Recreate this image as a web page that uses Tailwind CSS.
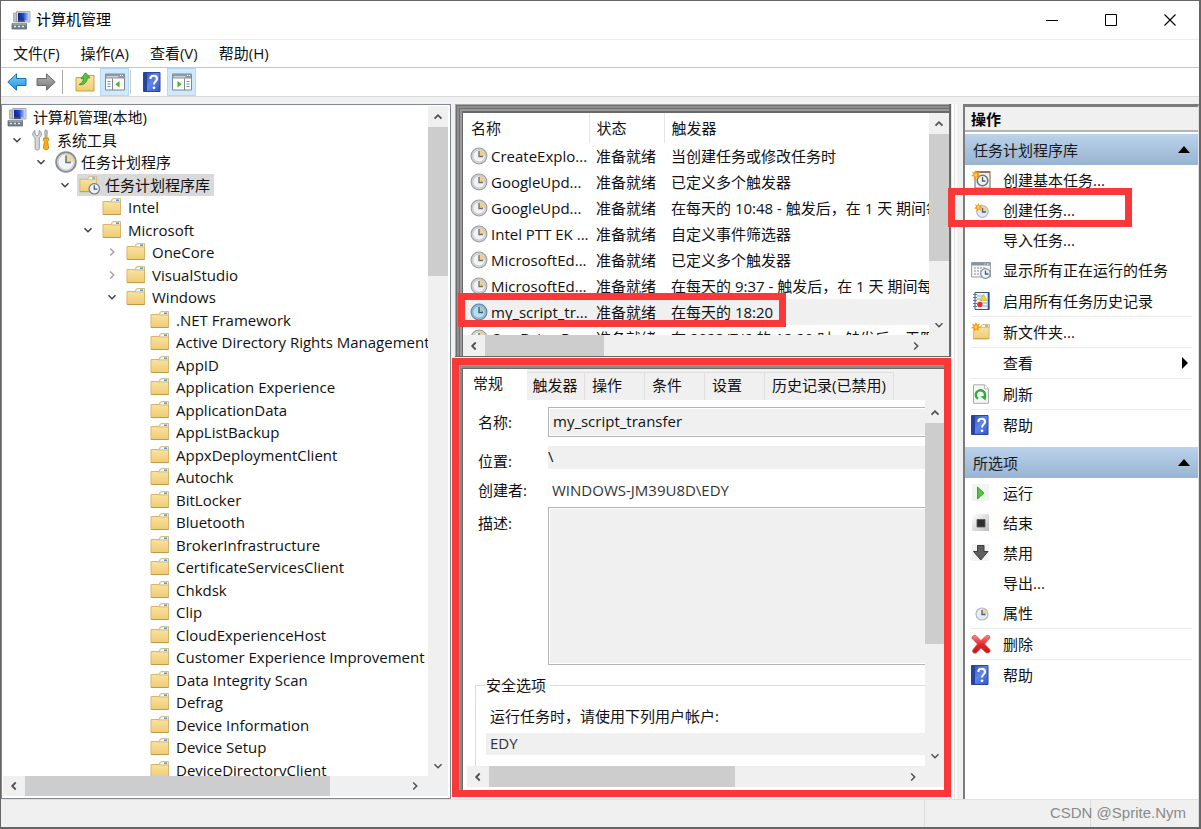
<!DOCTYPE html>
<html lang="zh-CN">
<head>
<meta charset="utf-8">
<title>计算机管理</title>
<script src="https://cdn.jsdelivr.net/npm/@tailwindcss/browser@4"></script>
</head>
<body class="h-screen overflow-hidden bg-[#666] font-['Open_Sans','Noto_Sans_CJK_SC',sans-serif] text-[15px] leading-[22px] text-[#111]">

<svg class="absolute size-0" aria-hidden="true">
  <defs>
    <linearGradient id="gFolder" x1="0" y1="0" x2="0" y2="1"><stop offset="0" stop-color="#fbe7a8"/><stop offset="1" stop-color="#efcb73"/></linearGradient>
    <linearGradient id="gBlue" x1="0" y1="0" x2="1" y2="1"><stop offset="0" stop-color="#2b4cae"/><stop offset=".5" stop-color="#5f86e6"/><stop offset="1" stop-color="#2f56c4"/></linearGradient>
    <linearGradient id="gScreen" x1="0" y1="0" x2="1" y2="0"><stop offset="0" stop-color="#0c1fa8"/><stop offset=".5" stop-color="#1f49e0"/><stop offset="1" stop-color="#b9d0ff"/></linearGradient>
    <linearGradient id="gSky" x1="0" y1="0" x2="0" y2="1"><stop offset="0" stop-color="#7fd0f8"/><stop offset="1" stop-color="#1d8fdc"/></linearGradient>
    <linearGradient id="gGrey" x1="0" y1="0" x2="0" y2="1"><stop offset="0" stop-color="#b5b5b5"/><stop offset="1" stop-color="#787878"/></linearGradient>
    <linearGradient id="gRed" x1="0" y1="0" x2="0" y2="1"><stop offset="0" stop-color="#f58a86"/><stop offset=".5" stop-color="#e8262a"/><stop offset="1" stop-color="#c4141a"/></linearGradient>
    <linearGradient id="gStop" x1="0" y1="0" x2="1" y2="1"><stop offset="0" stop-color="#fff"/><stop offset="1" stop-color="#bdbdbd"/></linearGradient>
  </defs>
  <symbol id="folder" viewBox="0 0 20 20">
    <path d="M1 4.500h8l1.500-2.500h8v15.500H1z" fill="url(#gFolder)" stroke="#d8b56c"/>
    <path d="M9.500 3.500l1.500-2h7.500v3.500H9z" fill="#f3ead0" stroke="#cdb682" stroke-width=".8"/>
    <path d="M11.500 2.500h2.500v1.500h-2.500z" fill="#fff"/><path d="M14 2.500h3v1.500h-3z" fill="#4f9bd8"/>
    <path d="M1 17.500h17.500" stroke="#c39a48"/>
  </symbol>
  <symbol id="clock" viewBox="0 0 20 20">
    <circle cx="10" cy="10" r="8.800" fill="#d4d6d8" stroke="#9a9da0" stroke-width="1.200"/>
    <circle cx="10" cy="10" r="6.800" fill="#f1f2f3" stroke="#b4b7ba" stroke-width=".7"/>
    <path d="M10 10V3.400A6.600 6.600 0 0 1 16.600 10z" fill="#f3cf8c"/>
    <path d="M10 4.500V10.500H14.500" fill="none" stroke="#6f6f72" stroke-width="1.500"/>
  </symbol>
  <symbol id="clockblue" viewBox="0 0 20 20">
    <circle cx="10" cy="10" r="8.800" fill="#8dbbd9" stroke="#5b87a5" stroke-width="1.200"/>
    <circle cx="10" cy="10" r="6.800" fill="#b9dbef" stroke="#7ba8c6" stroke-width=".7"/>
    <path d="M10 10V3.400A6.600 6.600 0 0 1 16.600 10z" fill="#a9c9bd"/>
    <path d="M10 4.500V10.500H14.500" fill="none" stroke="#35607e" stroke-width="1.600"/>
  </symbol>
  <symbol id="clockbig" viewBox="0 0 20 20">
    <circle cx="10" cy="10" r="8.900" fill="#f2f4f6" stroke="#8b8d90" stroke-width="1.800"/>
    <circle cx="10" cy="10" r="7.300" fill="none" stroke="#c9ccd0" stroke-width="1"/>
    <path d="M10 10V3A7 7 0 0 1 17 10z" fill="#f6d79a"/>
    <path d="M10 4V10.500H14.500" fill="none" stroke="#5b7696" stroke-width="1.400"/>
  </symbol>
  <symbol id="folderclock" viewBox="0 0 22 20">
    <use href="#folder" x="0" y="0" width="19" height="19"/>
    <circle cx="15.300" cy="13.800" r="5.200" fill="#eef1f4" stroke="#74787c" stroke-width="1.200"/>
    <path d="M15.300 10.300V14.200H18.300" fill="none" stroke="#2f5f95" stroke-width="1.300"/>
  </symbol>
  <symbol id="computer" viewBox="0 0 20 20">
    <path d="M5.500 1.500h13.500v10.500H5.500z" fill="#dcdcd4" stroke="#9a9a92" stroke-width=".8"/>
    <path d="M7 2.800h10.800v7.800H7z" fill="url(#gScreen)"/>
    <path d="M2.500 3h3v9h-3z" fill="#b9c6b6" stroke="#8f968c" stroke-width=".6"/>
    <path d="M6.500 12l3.500-7 3 4.500 1 2.500z" fill="#26365c" fill-opacity=".75"/>
    <path d="M1 13.500h14.500v5.500H1z" fill="#72808c" stroke="#5d6973" stroke-width=".8"/>
    <path d="M1.500 14h13.500" stroke="#b5c2cc"/><path d="M3 16.500h2M7 16.500h2M11 16.500h2" stroke="#dfe6eb" stroke-width="1.300"/>
  </symbol>
  <symbol id="tools" viewBox="0 0 20 22">
    <path d="M3 1.500v4l2 1.500 2-1.500v-4c2 .8 2.800 2.800 2.400 4.600C9 7.600 7.500 8.400 7.300 9v10.500c0 2-4.200 2-4.200 0V9C2.800 8.400 1.200 7.600.9 6.100.5 4.300 1.200 2.300 3 1.500z" fill="#d5d8da" stroke="#84888b" stroke-width=".8"/>
    <path d="M13.200 1h1.600l.6 2-.6 6h-1.600l-.6-6z" fill="#c2c5c7" stroke="#85888a" stroke-width=".7"/>
    <path d="M11.500 9h5l.2 2.500-1 1.200.9 6.300c0 2.300-5.200 2.300-5.200 0l.9-6.300-1-1.200z" fill="#f6ad1c" stroke="#c57f08" stroke-width=".8"/>
  </symbol>
  <symbol id="help" viewBox="0 0 18 20">
    <path d="M.5.5h16.500v19H.5z" fill="url(#gBlue)" stroke="#2a469c"/>
    <path d="M1 1h3v18H1z" fill="#26439b"/>
    <path d="M7.300 6.900C7.300 2.800 14 2.900 14 6.800c0 2.600-3 2.600-3 5.700" fill="none" stroke="#fff" stroke-width="2"/>
    <circle cx="11" cy="15.800" r="1.400" fill="#fff"/>
  </symbol>
  <symbol id="star" viewBox="0 0 10 10">
    <path d="M5 0l1.100 2.700L9 1.400 7.600 4.200 10 5.500 7.300 6.200 8 9 5.300 7.500 3 9.600 3 6.600 0 6l2.300-1.800L1 1.500l2.800 1.200z" fill="#fb9c14"/><circle cx="4.800" cy="4.900" r="1.500" fill="#ffd24a"/>
  </symbol>
  <symbol id="basic" viewBox="0 0 20 20">
    <path d="M4 2h15v16H4z" fill="#f4f2ee" stroke="#8d7c74" stroke-width="1.200"/><path d="M4 2h15" stroke="#a1584a" stroke-width="1.600"/>
    <circle cx="11.500" cy="10.500" r="5.300" fill="#f3f4f2" stroke="#6d7276" stroke-width="1.500"/>
    <path d="M11.500 7V11H14.500" fill="none" stroke="#41618a" stroke-width="1.300"/>
    <use href="#star" x="0" y="0" width="10" height="10"/>
  </symbol>
  <symbol id="create" viewBox="0 0 20 20">
    <circle cx="11.500" cy="11.500" r="5.800" fill="#dfe9f0" stroke="#a9b9c5" stroke-width="1.200"/>
    <path d="M11.500 11.500V6.500A5 5 0 0 1 16.500 11.500z" fill="#f2cf90"/>
    <path d="M11.500 8V12H15" fill="none" stroke="#41618a" stroke-width="1.300"/>
    <use href="#star" x="3" y="3" width="9" height="9"/>
  </symbol>
  <symbol id="props" viewBox="0 0 20 20">
    <circle cx="11" cy="11" r="6" fill="#e6eef4" stroke="#aebac4" stroke-width="1.200"/>
    <path d="M11 11V5.500A5.500 5.500 0 0 1 16.500 11z" fill="#f5d292"/>
    <path d="M11 7V11.500H14.500" fill="none" stroke="#41618a" stroke-width="1.300"/>
  </symbol>
  <symbol id="running" viewBox="0 0 20 20">
    <path d="M.6 2.500h18.800v14.500H.6z" fill="#f7f7f5" stroke="#9a9da0"/><path d="M.6 2.500h18.800v3H.6z" fill="#8695a5"/>
    <path d="M13.500 4h1M16 4h1.500" stroke="#fff"/>
    <path d="M3 8h12M3 11h9M3 14h7" stroke="#8a8f94" stroke-dasharray="2 1"/>
    <circle cx="14.500" cy="13.500" r="4.800" fill="#eef4f6" stroke="#82929c" stroke-width="1.200"/>
    <path d="M14.500 10.500V14H17.500" fill="none" stroke="#35608d" stroke-width="1.300"/>
  </symbol>
  <symbol id="history" viewBox="0 0 20 20">
    <path d="M4 1.500h14v17H4z" fill="#f1f5fb" stroke="#35548f"/><path d="M17.500 1v18" stroke="#2b4f9c" stroke-width="1.600"/>
    <path d="M6 5h6M6 8h5M10 12h6M10 15h6" stroke="#8ea6c8"/>
    <path d="M2 3.500h4M2 6.500h4M2 9.500h4M2 12.500h4M2 15.500h4" stroke="#5f6a76" stroke-width=".9"/>
    <path d="M12.500 3.500l3.500 6H9z" fill="#f7d91f" stroke="#c9a60c" stroke-width=".6"/>
    <circle cx="8.800" cy="13.500" r="2.700" fill="#d93434"/>
  </symbol>
  <symbol id="newfolder" viewBox="0 0 20 20">
    <use href="#folder" x="1" y="1" width="19" height="18"/><use href="#star" x="0" y="0" width="10" height="10"/>
  </symbol>
  <symbol id="refresh" viewBox="0 0 20 20">
    <path d="M2.500.8h11l4 4v14.500h-15z" fill="#f4f6f4" stroke="#a9adab"/><path d="M13.500.8v4h4" fill="#fff" stroke="#a9adab" stroke-width=".8"/>
    <path d="M7 14.800A4.600 4.600 0 1 1 13.200 13.500" fill="none" stroke="#2fae36" stroke-width="2.400"/>
    <path d="M9.500 12.500l6-1-1 5z" fill="#2fae36"/>
  </symbol>
  <symbol id="run" viewBox="0 0 20 20"><path d="M1 1h17v17H1z" fill="#f3f3f3"/><path d="M6.500 4l6.500 6-6.500 6z" fill="#4ccb3a" stroke="#2c9a24" stroke-width=".9"/></symbol>
  <symbol id="stop" viewBox="0 0 20 20"><path d="M1 1h17v17H1z" fill="url(#gStop)"/><path d="M6 6.500h8v7.500H6z" fill="#2e2e2e" stroke="#555" stroke-width=".8"/></symbol>
  <symbol id="disable" viewBox="0 0 20 20"><path d="M1 1h17v17H1z" fill="#f3f3f3"/><path d="M6.500 2.500h6.500v6h4L9.800 17 2.500 8.500h4z" fill="#5e5e5e" stroke="#3b3b3b" stroke-linejoin="round"/></symbol>
  <symbol id="delete" viewBox="0 0 20 20"><path d="M1 3.500C1.500 1 4 .8 5.500 2.200L10 6.600l4.500-4.400C16 .8 18.800 1 19 3c.1 1-.5 1.600-1.200 2.300L13.600 10l5 5.200c.8 1 .8 2-.2 3s-2.800 1-3.600.2L10 14l-4.300 4.600c-1 .9-2.800.8-3.600-.2s-.7-2.200.2-3.200L6.500 10 2 5.500C1.300 4.800.8 4.300 1 3.500z" fill="url(#gRed)" stroke="#c9474a" stroke-width=".7"/></symbol>
  <symbol id="back" viewBox="0 0 20 20"><path d="M.8 10L9.500 1.800V6.500H19v7H9.500v4.700z" fill="url(#gSky)" stroke="#1673b8" stroke-linejoin="round"/></symbol>
  <symbol id="fwd" viewBox="0 0 20 20"><path d="M19.200 10L10.500 1.800V6.500H1v7h9.500v4.700z" fill="url(#gGrey)" stroke="#6a6a6a" stroke-linejoin="round"/></symbol>
  <symbol id="up" viewBox="0 0 20 20">
    <path d="M1 5.500h7l1.500-2H19V19H1z" fill="url(#gFolder)" stroke="#c99f45"/>
    <path d="M4 12.500C7 11.500 8.200 9.500 8.500 6.500L6 6.800 10.500.8l4.500 5-2.700.3C12 10.500 9 13.500 4 12.500z" fill="#56c43c" stroke="#2f8f22" stroke-width=".8"/>
  </symbol>
  <symbol id="pane" viewBox="0 0 20 18">
    <path d="M.5 1h19v16H.5z" fill="#fbfbfb" stroke="#7e868e"/><path d="M.5 1h19v4.500H.5z" fill="#8f99a3"/>
    <path d="M1.500 3.800h12" stroke="#e4e8ec"/><path d="M15 2.500h1M17 2.500h1" stroke="#fff" stroke-width="1.200"/>
    <path d="M2.500 8.500h3M2.500 11h3M2.500 13.500h3" stroke="#6c8cb0"/><path d="M7.500 5.500v11.500" stroke="#7e868e"/>
    <path d="M14.500 8v6.500L10.500 11.200z" fill="#43b02a"/>
  </symbol>
  <symbol id="pane2" viewBox="0 0 20 18">
    <path d="M.5 1h19v16H.5z" fill="#fbfbfb" stroke="#7e868e"/><path d="M.5 1h19v4.500H.5z" fill="#8f99a3"/>
    <path d="M1.500 3.800h12" stroke="#e4e8ec"/><path d="M15 2.500h1M17 2.500h1" stroke="#fff" stroke-width="1.200"/>
    <path d="M14.500 8.500h3M14.500 11h3M14.500 13.500h3" stroke="#6c8cb0"/><path d="M12.500 5.500v11.500" stroke="#7e868e"/>
    <path d="M5.500 8v6.500l4-3.300z" fill="#43b02a"/>
  </symbol>
  <symbol id="cd" viewBox="0 0 10 10"><path d="M1.500 3.200L5 6.700 8.500 3.200" fill="none" stroke="currentColor" stroke-width="1.500"/></symbol>
  <symbol id="cu" viewBox="0 0 10 10"><path d="M1.500 6.700L5 3.200 8.500 6.700" fill="none" stroke="currentColor" stroke-width="1.800"/></symbol>
  <symbol id="cr" viewBox="0 0 10 10"><path d="M3.200 1.500L6.700 5 3.200 8.500" fill="none" stroke="currentColor" stroke-width="1.500"/></symbol>
  <symbol id="cl" viewBox="0 0 10 10"><path d="M6.700 1.500L3.200 5 6.700 8.500" fill="none" stroke="currentColor" stroke-width="1.800"/></symbol>
</svg>

<div class="flex h-full flex-col border-t border-r-2 border-b-2 border-l border-[#666] bg-[#f0f0f0]">

  <header class="flex h-[38px] shrink-0 items-center bg-white pl-[10px]">
    <svg class="size-5"><use href="#computer"/></svg>
    <h1 class="ml-[5px] pb-[2px] text-black">计算机管理</h1>
    <div class="ml-auto flex h-full">
      <button class="flex w-[59px] items-center justify-center" aria-label="最小化"><svg class="size-3" viewBox="0 0 12 12"><path d="M0 6.500h12" stroke="#000"/></svg></button>
      <button class="flex w-[59px] items-center justify-center" aria-label="最大化"><svg class="size-3" viewBox="0 0 12 12"><path d="M.5.5h11v11H.5z" fill="none" stroke="#000"/></svg></button>
      <button class="flex w-[59px] items-center justify-center" aria-label="关闭"><svg class="size-3" viewBox="0 0 12 12"><path d="M.5.5l11 11M11.500.5L.5 11.500" stroke="#000" stroke-width="1.100"/></svg></button>
    </div>
  </header>

  <nav class="flex h-[29px] shrink-0 items-center gap-[21px] border-t border-b border-t-[#ececec] border-b-[#c3c6cb] bg-white pb-[2px] pl-3">
    <button>文件(F)</button><button>操作(A)</button><button>查看(V)</button><button>帮助(H)</button>
  </nav>

  <div class="flex h-[29px] shrink-0 items-center border-b border-[#dcdcdc] bg-white pl-[6px]">
    <button aria-label="后退"><svg class="size-5"><use href="#back"/></svg></button>
    <button class="ml-[9px]" aria-label="前进"><svg class="size-5"><use href="#fwd"/></svg></button>
    <span class="ml-[6px] h-6 w-px bg-[#a8a8a8]"></span>
    <button class="ml-3" aria-label="向上"><svg class="size-5"><use href="#up"/></svg></button>
    <button class="ml-[5px] flex h-7 w-[29px] items-center justify-center border border-[#b2d9f5] bg-[#cfe8fb]" aria-label="显示控制台树"><svg class="h-[18px] w-5"><use href="#pane"/></svg></button>
    <span class="ml-px h-6 w-px bg-[#c8c8c8]"></span>
    <button class="ml-3" aria-label="帮助"><svg class="h-5 w-[18px]"><use href="#help"/></svg></button>
    <button class="ml-[6px] flex h-7 w-[29px] items-center justify-center border border-[#b2d9f5] bg-[#cfe8fb]" aria-label="显示操作窗格"><svg class="h-[18px] w-5"><use href="#pane2"/></svg></button>
  </div>

  <main class="flex min-h-0 flex-1 pt-[7px]">

    <section class="flex w-[450px] shrink-0 flex-col border border-[#828790] bg-white p-px pr-[2px]" aria-label="控制台树">
      <div class="flex min-h-0 flex-1">
        <div class="min-w-0 flex-1 overflow-hidden">
          <ul id="tree" class="grid h-[675px] auto-rows-fr"></ul>
        </div>
        <div class="flex w-5 shrink-0 flex-col bg-[#f0f0f0]">
          <button class="flex h-[21px] items-center justify-center text-[#505050]" aria-label="上滚"><svg class="size-[10px]"><use href="#cu"/></svg></button>
          <div class="h-[149px] bg-[#cdcdcd]"></div>
          <button class="mt-auto flex h-[21px] items-center justify-center text-[#505050]" aria-label="下滚"><svg class="size-[10px]"><use href="#cd"/></svg></button>
        </div>
      </div>
      <div class="mb-px flex h-5 shrink-0 bg-[#f0f0f0] pr-5">
        <button class="flex w-[22px] items-center justify-center text-[#505050]" aria-label="左滚"><svg class="size-[10px]"><use href="#cl"/></svg></button>
        <div class="w-[305px] bg-[#cdcdcd]"></div>
        <button class="ml-auto flex w-[26px] items-center justify-center text-[#505050]" aria-label="右滚"><svg class="size-[10px]"><use href="#cr"/></svg></button>
      </div>
    </section>

    <div class="relative ml-1 flex min-w-0 flex-1 flex-col bg-[linear-gradient(to_right,#e4e4e4_0_1px,#fff_1px_3px,#e4e4e4_3px_4px,#fafafa_4px)] bg-[size:6px_100%] bg-right bg-no-repeat pr-[6px]">

      <section class="flex h-[253px] shrink-0 flex-col border-r-2 border-b border-[#696969] pt-[9px] pl-2 shadow-[inset_1px_1px_#a8a8a8,inset_2px_2px_#6e6e6e,inset_4px_4px_#8e8e8e,inset_5px_5px_#6e6e6e,inset_7px_7px_#9a9a9a,inset_9px_9px_#696969]" aria-label="任务列表">
        <div class="flex min-h-0 flex-1 bg-white">
          <div class="min-w-0 flex-1 overflow-hidden">
            <table class="w-[640px] table-fixed">
              <thead>
                <tr class="h-[30px] text-left">
                  <th class="w-[126px] border-r border-[#e5e5e5] pl-2 font-normal">名称</th>
                  <th class="w-[75px] border-r border-[#e5e5e5] pl-[7px] font-normal">状态</th>
                  <th class="pl-[7px] font-normal">触发器</th>
                </tr>
              </thead>
              <tbody id="tasks"></tbody>
            </table>
          </div>
          <div class="flex w-5 shrink-0 flex-col bg-[#f0f0f0]">
            <button class="flex h-[21px] items-center justify-center text-[#505050]" aria-label="上滚"><svg class="size-[10px]"><use href="#cu"/></svg></button>
            <div class="h-[127px] bg-[#cdcdcd]"></div>
            <button class="mt-auto flex h-[21px] items-center justify-center text-[#505050]" aria-label="下滚"><svg class="size-[10px]"><use href="#cd"/></svg></button>
          </div>
        </div>
        <div class="flex h-[21px] shrink-0 bg-[#f0f0f0] pr-5">
          <button class="flex w-[22px] items-center justify-center text-[#505050]" aria-label="左滚"><svg class="size-[10px]"><use href="#cl"/></svg></button>
          <div class="w-[119px] bg-[#cdcdcd]"></div>
          <button class="ml-auto flex w-[26px] items-center justify-center text-[#505050]" aria-label="右滚"><svg class="size-[10px]"><use href="#cr"/></svg></button>
        </div>
      </section>

      <section class="mt-1 mb-[2px] flex min-h-0 flex-1 flex-col pt-2 pr-[7px] pb-[7px] pl-2 shadow-[inset_5px_5px_#9a9a9a,inset_7px_7px_#8a8a8a,inset_9px_9px_#696969]" aria-label="任务详细信息">
        <div class="flex h-[31px] shrink-0 items-end bg-[#f0f0f0]" role="tablist">
          <button role="tab" aria-selected="true" class="h-full w-16 bg-white pr-[14px]"><span class="block pb-1">常规</span></button>
          <button role="tab" class="h-7 w-[58px] border-t border-r border-[#dfdfdf] pr-px pb-[3px]">触发器</button>
          <button role="tab" class="h-7 w-[60px] border-t border-r border-[#dfdfdf] pr-[15px] pb-[3px]">操作</button>
          <button role="tab" class="h-7 w-[60px] border-t border-r border-[#dfdfdf] pr-[15px] pb-[3px]">条件</button>
          <button role="tab" class="h-7 w-[60px] border-t border-r border-[#dfdfdf] pr-[15px] pb-[3px]">设置</button>
          <button role="tab" class="h-7 w-[129px] border-t border-r border-[#dfdfdf] pb-[3px] whitespace-nowrap">历史记录(已禁用)</button>
        </div>
        <div class="flex min-h-0 flex-1 bg-white">
          <form class="min-w-0 flex-1 overflow-hidden pt-[7px] pl-3">
            <div class="flex h-[30px] items-center pl-[3px]">
              <label for="fName" class="w-[70px] shrink-0">名称:</label>
              <input id="fName" readonly value="my_script_transfer" class="h-full min-w-0 flex-1 border border-r-0 border-[#b4b4b4] bg-[#f0f0f0] px-1 pb-[2px] shadow-[inset_1px_1px_#fff,inset_0_-1px_#fff]">
            </div>
            <div class="mt-[9px] flex h-[23px] items-center pl-[3px]">
              <label for="fLoc" class="w-[70px] shrink-0 pt-[6px]">位置:</label>
              <input id="fLoc" readonly value="\" class="h-full min-w-0 flex-1 bg-[#f0f0f0] pb-1">
            </div>
            <div class="mt-[10px] flex h-6 items-center pb-[2px] pl-[3px]">
              <label for="fAuthor" class="w-[74px] shrink-0">创建者:</label>
              <input id="fAuthor" readonly value="WINDOWS-JM39U8D\EDY" class="min-w-0 flex-1 text-[#333]">
            </div>
            <div class="mt-1 flex h-[158px] pl-[3px]">
              <label for="fDesc" class="w-[70px] shrink-0 pt-[5px]">描述:</label>
              <textarea id="fDesc" readonly class="min-w-0 flex-1 resize-none border border-r-0 border-[#b4b4b4] bg-[#f0f0f0] shadow-[inset_1px_1px_#fff,inset_0_-1px_#fff]"></textarea>
            </div>
            <fieldset class="mt-[9px] h-[140px] border border-r-0 border-[#dcdcdc] pl-[10px]">
              <legend class="pr-1">安全选项</legend>
              <p class="mt-[9px] pl-1">运行任务时，请使用下列用户帐户:</p>
              <input readonly value="EDY" aria-label="用户帐户" class="mt-[6px] block h-[22px] w-full bg-[#f0f0f0] px-1 pb-[2px] text-[#333]">
              <label class="mt-2 flex items-center gap-[10px] pl-1"><input type="radio" name="logon" class="size-[14px]">只在用户登录时运行(R)</label>
            </fieldset>
          </form>
          <div class="flex w-[19px] shrink-0 flex-col bg-[#f0f0f0] pt-[2px]">
            <button class="flex h-[21px] items-center justify-center text-[#505050]" aria-label="上滚"><svg class="size-[10px]"><use href="#cu"/></svg></button>
            <div class="h-[221px] bg-[#cdcdcd]"></div>
            <button class="mt-auto flex h-[21px] items-center justify-center text-[#505050]" aria-label="下滚"><svg class="size-[10px]"><use href="#cd"/></svg></button>
          </div>
        </div>
        <div class="flex h-6 shrink-0 bg-white pb-[3px] pl-1">
          <div class="flex flex-1 bg-[#f0f0f0] pr-[19px]">
            <button class="flex w-[22px] items-center justify-center text-[#505050]" aria-label="左滚"><svg class="size-[10px]"><use href="#cl"/></svg></button>
            <div class="w-[246px] bg-[#cdcdcd]"></div>
            <button class="ml-auto flex w-[25px] items-center justify-center text-[#505050]" aria-label="右滚"><svg class="size-[10px]"><use href="#cr"/></svg></button>
          </div>
        </div>
      </section>

      <!-- red highlights: selected task and details pane -->
      <div class="pointer-events-none absolute top-[189px] left-[3px] h-[34px] w-[328px] border-7 border-[#fb3838]"></div>
      <div class="pointer-events-none absolute top-[254px] right-[6px] bottom-[2px] -left-[3px] border-7 border-[#fb3838]"></div>
    </div>

    <aside class="relative ml-[6px] flex w-[236px] shrink-0 flex-col border-t-3 border-r border-l-2 border-t-[#7c7c7c] border-r-[#e3e3e3] border-l-[#7c7c7c] bg-white" aria-label="操作">
      <h2 class="h-[25px] border-b-2 border-[#b4b4b4] bg-[#f0f0f0] pt-px pl-[6px] font-bold text-black">操作</h2>
      <div id="actions" class="pt-[2px]"></div>
      <!-- red highlight: create task -->
      <div class="pointer-events-none absolute top-[81px] -left-[17px] h-[39px] w-[184px] border-7 border-[#fb3838]"></div>
    </aside>
  </main>

  <footer class="flex h-[28px] shrink-0 justify-end border-t border-[#e0e0e0] bg-[#f0f0f0]">
    <div class="relative flex w-[275px] justify-end border-r border-l border-[#dadada] pr-3 font-['Liberation_Sans'] text-[15px] leading-[25px] text-[#8a8a8a]">
      <span class="absolute top-0 right-[107px] h-full w-px bg-[#dadada]"></span>
      <span class="relative">CSDN @Sprite.Nym</span>
    </div>
  </footer>
</div>

<script>
const pad = ['pl-[4px]', 'pl-[6px]', 'pl-[30px]', 'pl-[54px]', 'pl-[77px]', 'pl-[101px]', 'pl-[125px]'];
const tree = [
  [0, '', 'computer', '计算机管理(本地)'], [1, 'cd', 'tools', '系统工具'], [2, 'cd', 'clockbig', '任务计划程序'],
  [3, 'cd', 'folderclock', '任务计划程序库', true], [4, '', 'folder', 'Intel'], [4, 'cd', 'folder', 'Microsoft'],
  [5, 'cr', 'folder', 'OneCore'], [5, 'cr', 'folder', 'VisualStudio'], [5, 'cd', 'folder', 'Windows'],
  ...['.NET Framework', 'Active Directory Rights Management', 'AppID', 'Application Experience', 'ApplicationData',
    'AppListBackup', 'AppxDeploymentClient', 'Autochk', 'BitLocker', 'Bluetooth', 'BrokerInfrastructure',
    'CertificateServicesClient', 'Chkdsk', 'Clip', 'CloudExperienceHost', 'Customer Experience Improvement Program',
    'Data Integrity Scan', 'Defrag', 'Device Information', 'Device Setup', 'DeviceDirectoryClient'].map(n => [6, '', 'folder', n])
];
const treeIcon = { folder: 'mr-[2px] size-5', computer: 'mr-[2px] size-5', tools: 'size-[22px]', clockbig: 'size-[22px]', folderclock: 'size-[22px]' };
document.getElementById('tree').innerHTML = tree.map(([lv, ch, ic, name, sel]) => `
  <li class="flex items-center ${pad[lv]}">
    ${lv ? `<span class="mr-1 flex w-4 shrink-0 justify-center ${ch === 'cr' ? 'text-[#a6a6a6]' : 'text-[#404040]'}">${ch ? `<svg class="size-[10px]"><use href="#${ch}"/></svg>` : ''}</span>` : ''}
    <span class="flex h-full items-center gap-1 whitespace-nowrap ${lv ? 'pr-1 pl-[2px]' : 'pr-1'} ${sel ? 'bg-[#d9d9d9]' : ''}">
      <svg class="${treeIcon[ic]} shrink-0"><use href="#${ic}"/></svg>${name}
    </span>
  </li>`).join('');

const tasks = [
  ['CreateExplo...', '当创建任务或修改任务时'], ['GoogleUpd...', '已定义多个触发器'],
  ['GoogleUpd...', '在每天的 10:48 - 触发后，在 1 天 期间每隔 1 小时 重复一次。'], ['Intel PTT EK ...', '自定义事件筛选器'],
  ['MicrosoftEd...', '已定义多个触发器'], ['MicrosoftEd...', '在每天的 9:37 - 触发后，在 1 天 期间每隔 1 小时 重复一次。'],
  ['my_script_tr...', '在每天的 18:20', true], ['OneDrive Re...', '在 2023/7/6 的 18:20 时 - 触发后，无限期地每隔 1.00:00:00 重复一次。']
];
document.getElementById('tasks').innerHTML = tasks.map(([n, t, sel]) => `
  <tr class="h-[26px] whitespace-nowrap ${sel ? 'bg-[#f0f0f0]' : ''}">
    <td class="pl-[7px]"><span class="flex items-center gap-[3px]"><svg class="size-[18px] shrink-0"><use href="#${sel ? 'clockblue' : 'clock'}"/></svg>${n}</span></td>
    <td class="pl-[7px]">准备就绪</td>
    <td class="overflow-hidden pl-[7px]">${t}</td>
  </tr>`).join('');

// each entry: icon, label, row style (1 and 2 draw a line below), has submenu
const rowStyle = ['h-[30px]', 'h-[31px] border-b border-[#ececec]', 'h-8 border-b border-[#ececec]'];
const groups = [
  ['任务计划程序库', [['basic', '创建基本任务...', 0], ['create', '创建任务...', 0], ['', '导入任务...', 0], ['running', '显示所有正在运行的任务', 0],
    ['history', '启用所有任务历史记录', 2], ['newfolder', '新文件夹...', 1], ['', '查看', 1, 1], ['refresh', '刷新', 1], ['help', '帮助', 0]]],
  ['所选项', [['run', '运行', 0], ['stop', '结束', 0], ['disable', '禁用', 0], ['', '导出...', 0], ['props', '属性', 1], ['delete', '删除', 1], ['help', '帮助', 0]]]
];
document.getElementById('actions').innerHTML = groups.map(([title, items]) => `
  <section class="mb-[7px]">
    <h3 class="flex h-[31px] items-center justify-between bg-linear-to-b from-[#bad2eb] to-[#99b4d2] pr-2 pl-2 text-[#1a1a1a]">${title}
      <svg class="h-[7px] w-3" viewBox="0 0 12 7"><path d="M0 7L6 0l6 7z" fill="#000"/></svg></h3>
    <ul>${items.map(([ic, n, line, more]) => `
      <li class="px-[6px]"><button class="flex w-full items-center text-left ${rowStyle[line]}">
        <span class="mr-3 flex w-5 justify-start">${ic ? `<svg class="${ic === 'help' ? 'h-5 w-[18px]' : 'size-5'}"><use href="#${ic}"/></svg>` : ''}</span>${n}
        ${more ? '<svg class="ml-auto mr-1 h-3 w-[6px]" viewBox="0 0 6 12"><path d="M0 0l6 6-6 6z" fill="#000"/></svg>' : ''}
      </button></li>`).join('')}</ul>
  </section>`).join('');
</script>
</body>
</html>
